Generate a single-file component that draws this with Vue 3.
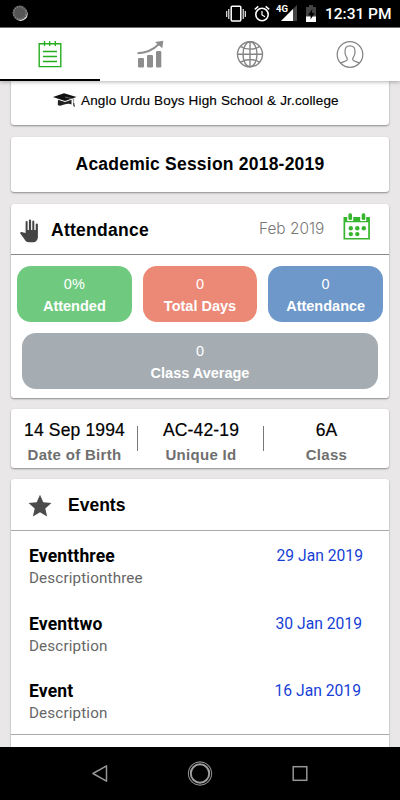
<script setup>
const tiles = [
  { value: '0%', label: 'Attended', tone: 'green' },
  { value: '0', label: 'Total Days', tone: 'coral' },
  { value: '0', label: 'Attendance', tone: 'blue' },
]
const facts = [
  { value: '14 Sep 1994', label: 'Date of Birth' },
  { value: 'AC-42-19', label: 'Unique Id' },
  { value: '6A', label: 'Class' },
]
const events = [
  { title: 'Eventthree', text: 'Descriptionthree', date: '29 Jan 2019', cls: 'e1' },
  { title: 'Eventtwo', text: 'Description', date: '30 Jan 2019', cls: 'e2' },
  { title: 'Event', text: 'Description', date: '16 Jan 2019', cls: 'e3' },
]
const ticks = Array.from({ length: 16 }, (_, i) => i * 22.5)
</script>

<template>
  <div class="screen">
    <header class="status">
      <svg class="spinner" width="18" height="18" viewBox="0 0 18 18">
        <circle cx="8.7" cy="8.900" r="7" fill="#eee" />
        <circle cx="7.800" cy="7.800" r="7.300" fill="#555" />
        <g stroke="#999" stroke-width=".8"><path v-for="t in ticks" :key="t" d="M7.800 .8v1.500" :transform="`rotate(${t} 7.8 7.8)`" /></g>
      </svg>
      <svg class="vibrate" width="20" height="18" viewBox="0 0 20 18" fill="none" stroke="#fff">
        <rect x="5.2" y="1.200" width="9.600" height="14.800" rx="1" stroke-width="1.500" />
        <path d="M2.800 4v10M17.200 4v10M.7 6v6M19.300 6v6" stroke-width="1.100" />
      </svg>
      <svg class="alarm" width="16" height="18" viewBox="0 0 16 18" fill="none" stroke="#fff">
        <circle cx="8" cy="9.500" r="6.200" stroke-width="1.600" />
        <path d="M.8 4.300 4.300 1.400M15.200 4.300l-3.500-2.900" stroke-width="1.500" /><path d="M8 6v4l3 1.800" stroke-width="1.200" />
      </svg>
      <div class="network">
        <span>4G</span>
        <svg width="16" height="16" viewBox="0 0 16 16"><path d="M0 16 16 0v16z" fill="#444" /><path d="M0 16 12 4v12z" fill="#fff" /></svg>
      </div>
      <svg class="battery" width="10" height="17" viewBox="0 0 10 17">
        <path d="M3 0h4v2h3v15H0V2h3z" fill="#444" /><path d="M0 11.500h10V17H0z" fill="#fff" />
        <path d="M6.300 4 2 10.300h2.600v4.200L8.500 8H6z" fill="#000" />
      </svg>
      <span class="clock">12:31 PM</span>
    </header>

    <nav class="tabs">
      <div class="tab active">
        <svg width="24" height="28" viewBox="0 0 24 28" fill="none" stroke="#25ad20">
          <path d="M1.200 3.800h21.600v22.800H1.200z" stroke-width="1.400" />
          <path d="M6.500 1v5M11.700 1v5M17.300 1v5" stroke-width="1.300" />
          <path d="M5 11.500h14M5 16.500h14M5 21.500h14" stroke-width="1.300" />
        </svg>
      </div>
      <div class="tab">
        <svg width="28" height="28" viewBox="0 0 28 28" fill="#8d8d8d">
          <rect x="2" y="18" width="6" height="9.500" rx="1.200" /><rect x="11" y="15" width="6" height="12.500" rx="1.200" /><rect x="20" y="11" width="5.300" height="16.500" rx="1.200" />
          <path d="M1.500 13.300C9 13 17 10 23 4" fill="none" stroke="#8d8d8d" stroke-width="1.900" />
          <path d="M19 2.100 27.300.7 26.300 8.300z" />
        </svg>
      </div>
      <div class="tab">
        <svg width="28" height="28" viewBox="0 0 28 28" fill="none" stroke="#858585" stroke-width="1.400">
          <circle cx="14" cy="14.300" r="12.500" /><ellipse cx="14" cy="14.300" rx="7" ry="12.500" />
          <path d="M14 1.800v25M1.500 14.300h25M4.300 6.300c5.500 3.800 13.900 3.800 19.400 0M4.300 22.300c5.500-3.800 13.900-3.800 19.400 0" />
        </svg>
      </div>
      <div class="tab">
        <svg width="28" height="28" viewBox="0 0 28 28" fill="none" stroke="#858585" stroke-width="1.250">
          <circle cx="14" cy="14.500" r="12.800" />
          <path d="M4.500 23.200c2.800-1.700 6.300-1.900 6.700-3.300.3-1.100.1-1.800-.6-2.700-1.300-1.700-1.500-3-1.600-4.900C8.700 8 10.400 5.800 14 5.800s5.300 2.200 5 6.500c-.1 1.900-.3 3.200-1.600 4.900-.7.900-.9 1.600-.6 2.700.4 1.400 3.900 1.600 6.700 3.300" />
        </svg>
      </div>
    </nav>

    <main class="content">
      <section class="card school">
        <svg width="24" height="15" viewBox="0 0 24 15">
          <path d="M0 4 11 0.300 23.500 4 12 8z" fill="#111" />
          <path d="M5 6.700 12 9l6.500-2.300v4.800c-3.500-2-8 .8-11.500 1.200C5.500 12.800 4.600 12 4.800 11z" fill="#222" />
          <path d="M12 4l8.600 2v7" fill="none" stroke="#777" stroke-width=".8" /><path d="M20 10h1.300l.8 4-1.600-.8z" fill="#555" />
        </svg>
        <span>Anglo Urdu Boys High School &amp; Jr.college</span>
      </section>

      <section class="card session"><span>Academic Session 2018-2019</span></section>

      <section class="card attendance">
        <div class="head">
          <svg class="hand" width="20" height="24" viewBox="0 0 20 24" fill="#454545">
            <path d="M5.600 14V3q0-1.100 1-1.100t1 1.100v8h1.300V1.600Q8.900.5 10 .5t1.100 1.100V11h1.200V2.500q0-1.100 1-1.100t1 1.100V11h1.400V5.500q0-1.100 1.100-1.100t1.100 1.100V18c0 3-2.100 5.300-5 5.300H9c-2.200 0-3.500-1-4.700-3.300L.3 14.500c-.5-1 1-1.800 2-1.200z" />
          </svg>
          <h2>Attendance</h2>
          <span class="month">Feb 2019</span>
          <svg class="calendar" width="28" height="28" viewBox="0 0 28 28" fill="#38b52e">
            <path d="M.5 5h3.700v4h6V5h7v4h6V5h3.700v22.500H.5zM2.200 10.300v15.800h23V10.300z" fill-rule="evenodd" />
            <rect x="5.400" y="1.200" width="3.600" height="6.800" rx="1.500" /><rect x="18.700" y="1.200" width="3.600" height="6.800" rx="1.500" />
            <circle cx="7.800" cy="16.200" r="2.200" /><circle cx="14.300" cy="16.200" r="2.200" /><circle cx="20.800" cy="16.200" r="2.200" />
            <circle cx="7.800" cy="22.100" r="2.200" /><circle cx="14.300" cy="22.100" r="2.200" />
          </svg>
        </div>
        <div class="tiles">
          <div v-for="t in tiles" :key="t.label" class="tile" :class="t.tone"><span>{{ t.value }}</span><b>{{ t.label }}</b></div>
        </div>
        <div class="tile gray"><span>0</span><b>Class Average</b></div>
      </section>

      <section class="card facts">
        <div v-for="f in facts" :key="f.label" class="fact"><span>{{ f.value }}</span><b>{{ f.label }}</b></div>
      </section>

      <section class="card events">
        <div class="events-head">
          <svg width="24" height="23" viewBox="0 0 24 23"><path d="M12 .8l3.300 7.500 8.100.8-6.100 5.400 1.800 7.900-7.100-4.100-7.100 4.100 1.800-7.900L.6 9.100l8.100-.8z" fill="#4b4b4b" /></svg>
          <h2>Events</h2>
        </div>
        <div class="list">
          <article v-for="e in events" :key="e.title" class="event" :class="e.cls">
            <div><h3>{{ e.title }}</h3><p>{{ e.text }}</p></div>
            <time>{{ e.date }}</time>
          </article>
        </div>
      </section>
    </main>

    <footer class="navbar">
      <svg width="18" height="20" viewBox="0 0 18 20"><path d="M2 9.500 15.500 1.800v15.400z" fill="none" stroke="#969696" stroke-width="1.500" stroke-linejoin="round" /></svg>
      <svg width="26" height="26" viewBox="0 0 26 26" fill="none"><circle cx="13" cy="12.500" r="11.600" stroke="#8c8c8c" stroke-width="1.100" /><circle cx="13" cy="12.500" r="9.200" stroke="#a0a0a0" stroke-width="1.900" /></svg>
      <svg width="18" height="18" viewBox="0 0 18 18"><rect x="2.200" y="1.700" width="13.600" height="13.600" fill="none" stroke="#969696" stroke-width="1.500" /></svg>
    </footer>
  </div>
</template>

<style>
body { margin: 0; overflow: hidden; }
</style>

<style scoped>
* { box-sizing: border-box; }
.screen { width: 400px; height: 800px; display: flex; flex-direction: column; overflow: hidden; background: #e9e7e7; font-family: "Liberation Sans", sans-serif; color: #000; white-space: nowrap; }
svg { display: block; flex: none; }
h2, h3, p { margin: 0; }
.status { height: 28px; flex: none; background: #000; border-bottom: 1px solid #777; display: flex; align-items: flex-start; color: #fff; }
.spinner { margin: 5px 196px 0 12px; }
.vibrate { margin-top: 5px; }
.alarm { margin: 5px 0 0 8px; }
.network { display: flex; margin: 4px 0 0 6px; font: 700 9.500px/10px Roboto, sans-serif; }
.network svg { margin: 1px 0 0 -7px; }
.network span { position: relative; }
.battery { margin: 5px 0 0 9px; }
.clock { margin: 3px 0 0 9px; font: 500 15.500px/22px Roboto, sans-serif; }
.tabs { height: 53px; flex: none; display: grid; grid-template-columns: repeat(4, 1fr); background: #fff; box-shadow: 0 1px 4px rgba(0, 0, 0, .3); z-index: 1; }
.tab { display: flex; justify-content: center; padding-top: 12px; border-bottom: 2px solid transparent; }
.tab.active { border-color: #000; }
.content { flex: 1; min-height: 0; overflow: hidden; padding: 0 11px; }
.card { background: #fff; border-radius: 3px; box-shadow: 0 1px 2px rgba(0, 0, 0, .4); }
.school { height: 44px; border-radius: 0 0 3px 3px; display: flex; align-items: flex-start; padding: 12px 0 0 42px; }
.school span { margin: -1px 0 0 4px; font-size: 13.500px; line-height: 18px; letter-spacing: .16px; -webkit-text-stroke: .15px; }
.session { margin-top: 12px; height: 55px; display: flex; align-items: center; justify-content: center; font-size: 17.500px; letter-spacing: .22px; font-weight: 700; }
.attendance { margin-top: 12px; height: 194px; }
.head { height: 51px; border-bottom: 1px solid #888; display: flex; align-items: flex-start; }
.hand { margin: 15px 0 0 9px; }
h2 { font-size: 17.500px; line-height: 22px; font-weight: 700; }
.head h2 { margin: 15px 0 0 11px; width: 108px; letter-spacing: .27px; }
.month { margin: 15px 0 0 100px; width: 75px; font: 300 15.400px/20px Inter, sans-serif; color: #777; }
.calendar { margin: 8px 0 0 9px; }
.tiles { display: grid; grid-template-columns: repeat(3, 1fr); gap: 11px; padding: 11px 6px 0; }
.tile { height: 56px; border-radius: 14px; color: #fff; display: flex; flex-direction: column; align-items: center; padding-top: 8px; }
.tile span { font-size: 14.500px; line-height: 20px; }
.tile b { font-size: 14.500px; line-height: 20px; margin-top: 2px; }
.green { background: #6fca80; }
.coral { background: #ec8876; }
.blue { background: #6e97ca; }
.gray { background: #a5adb3; margin: 11px 11px 0; }
.facts { margin-top: 11px; height: 59px; display: grid; grid-template-columns: 127px 126px 125px; }
.fact { display: flex; flex-direction: column; align-items: center; padding-top: 10px; background: linear-gradient(#777, #777) right 17px / 1px 25px no-repeat; }
.fact:last-child { background: none; }
.fact span { font-size: 17.500px; line-height: 22px; letter-spacing: .15px; -webkit-text-stroke: .2px; }
.fact b { font-size: 15px; line-height: 20px; letter-spacing: .3px; margin-top: 4px; color: #6f6f6f; }
.events { margin-top: 11px; height: 300px; }
.events-head { height: 52px; border-bottom: 1px solid #aaa; display: flex; align-items: flex-start; }
.events-head svg { margin: 15px 0 0 17px; }
.events-head h2 { margin: 15px 0 0 16px; }
.list { height: 204px; border-bottom: 1px solid #aaa; padding-top: 14px; font-family: Roboto, sans-serif; }
.event { height: 67.500px; display: flex; justify-content: space-between; padding: 0 26px 0 18px; }
.e2 { padding-right: 27px; }
.e3 { padding-right: 28px; }
h3 { font-size: 17.500px; line-height: 22px; letter-spacing: .15px; font-weight: 700; }
.event p { font-size: 15.200px; line-height: 20px; letter-spacing: .15px; margin-top: 1px; color: #666; }
.event time { font-size: 15.700px; line-height: 22px; color: #173fd6; }
.navbar { height: 53px; flex: none; background: #000; z-index: 1; display: flex; justify-content: center; align-items: center; gap: 78px; }
</style>
